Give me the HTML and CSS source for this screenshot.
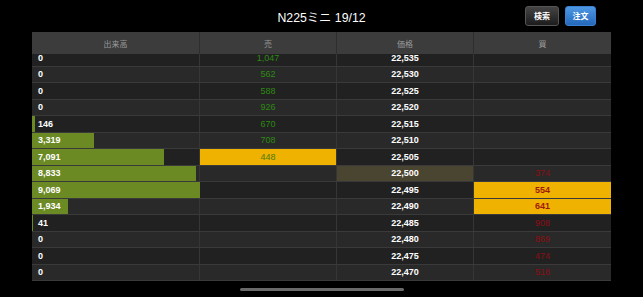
FILE: index.html
```html
<!DOCTYPE html>
<html lang="ja">
<head>
    <meta charset="UTF-8">
    <meta name="viewport" content="width=device-width, initial-scale=1.0">
    <title>N225ミニ 19/12</title>
    <link rel="stylesheet" href="styles.css">
</head>
<body>
    <div class="navbar">
        <div></div>
        <div class="title">N225ミニ 19/12</div>
        <div class="nav-buttons">
            <button class="btn btn-dark">検索</button>
            <button class="btn btn-blue">注文</button>
        </div>
    </div>

    <div class="board">
        <div class="board-head">
            <div>出来高</div>
            <div>売</div>
            <div>価格</div>
            <div>買</div>
        </div>
        <div class="board-body">
            <div class="rows">
                <div class="row"><div class="vol"><span>0</span></div><div class="sell">1,047</div><div class="price">22,535</div><div class="buy"></div></div>
                <div class="row"><div class="vol"><span>0</span></div><div class="sell">562</div><div class="price">22,530</div><div class="buy"></div></div>
                <div class="row"><div class="vol"><span>0</span></div><div class="sell">588</div><div class="price">22,525</div><div class="buy"></div></div>
                <div class="row"><div class="vol"><span>0</span></div><div class="sell">926</div><div class="price">22,520</div><div class="buy"></div></div>
                <div class="row"><div class="vol"><i class="bar" style="width: 3px"></i><span>146</span></div><div class="sell">670</div><div class="price">22,515</div><div class="buy"></div></div>
                <div class="row"><div class="vol"><i class="bar" style="width: 62px"></i><span>3,319</span></div><div class="sell">708</div><div class="price">22,510</div><div class="buy"></div></div>
                <div class="row"><div class="vol"><i class="bar" style="width: 132px"></i><span>7,091</span></div><div class="sell hot">448</div><div class="price">22,505</div><div class="buy"></div></div>
                <div class="row"><div class="vol"><i class="bar" style="width: 164px"></i><span>8,833</span></div><div class="sell"></div><div class="price current">22,500</div><div class="buy">374</div></div>
                <div class="row"><div class="vol"><i class="bar" style="width: 168px"></i><span>9,069</span></div><div class="sell"></div><div class="price">22,495</div><div class="buy hot">554</div></div>
                <div class="row"><div class="vol"><i class="bar" style="width: 36px"></i><span>1,934</span></div><div class="sell"></div><div class="price">22,490</div><div class="buy hot">641</div></div>
                <div class="row"><div class="vol"><i class="bar" style="width: 1px"></i><span>41</span></div><div class="sell"></div><div class="price">22,485</div><div class="buy">908</div></div>
                <div class="row"><div class="vol"><span>0</span></div><div class="sell"></div><div class="price">22,480</div><div class="buy">869</div></div>
                <div class="row"><div class="vol"><span>0</span></div><div class="sell"></div><div class="price">22,475</div><div class="buy">474</div></div>
                <div class="row"><div class="vol"><span>0</span></div><div class="sell"></div><div class="price">22,470</div><div class="buy">518</div></div>
            </div>
        </div>
    </div>

    <div class="home-bar"></div>
</body>
</html>
```

FILE: styles.css
```css
html, body {
    margin: 0;
    padding: 0;
    background: #000;
}
body {
    font-family: "Liberation Sans", "Noto Sans CJK JP", Arial, sans-serif;
    color: #fff;
    width: 643px;
    height: 297px;
    overflow: hidden;
}
.navbar {
    display: grid;
    grid-template-columns: 1fr auto 1fr;
    align-items: center;
    height: 32px;
}
.title {
    font-size: 12.3px;
    padding-top: 2px;
    margin-left: 0;
}
.nav-buttons {
    display: flex;
    justify-content: flex-end;
    gap: 6px;
    padding-right: 47px;
}
.btn {
    font-family: "Noto Sans CJK JP", sans-serif;
    font-size: 8px;
    font-weight: bold;
    color: #fff;
    height: 20px;
    padding: 0;
    border-radius: 3px;
    margin-top: -1px;
}
.btn-dark {
    width: 34px;
    background: linear-gradient(#444, #1c1c1c);
    border: 1px solid #555;
}
.btn-blue {
    width: 31px;
    background: linear-gradient(#4d98e4, #2468bc);
    border: 1px solid #3a7fd0;
}
.board {
    margin-left: 32px;
    width: 579px;
}
.board-head {
    display: grid;
    grid-template-columns: 168px 137px 137px 137px;
    height: 22px;
    background: #3c3c3c;
    font-family: "Noto Sans CJK JP", sans-serif;
    font-size: 8px;
    color: #9a9a9a;
}
.board-head div {
    display: flex;
    align-items: center;
    justify-content: center;
    border-right: 1px solid #2e2e2e;
}
.board-head div:last-child {
    border-right: none;
}
.board-body {
    height: 227px;
    overflow: hidden;
}
.rows {
    margin-top: -4px;
}
.row {
    display: grid;
    grid-template-columns: 168px 137px 137px 137px;
    height: 16.5px;
    box-sizing: border-box;
    border-bottom: 1px solid #3a3a3a;
    background: #212121;
    font-size: 9px;
    font-weight: bold;
}
.row:nth-child(even) {
    background: #292929;
}
.row > div {
    position: relative;
    display: flex;
    align-items: center;
    justify-content: center;
    border-right: 1px solid #363636;
}
.row > div:last-child {
    border-right: none;
}
.row .vol {
    justify-content: flex-start;
    padding-left: 6px;
}
.vol span {
    position: relative;
}
.bar {
    position: absolute;
    left: 0;
    top: 0;
    bottom: 0;
    background: #6b8a24;
}
.sell {
    color: #2d8a12;
    font-weight: normal;
}
.buy {
    color: #8c0d14;
    font-weight: normal;
}
.hot {
    background: #efb200;
}
.sell.hot {
    color: #4d7a10;
}
.buy.hot {
    color: #a01a0a;
    font-weight: bold;
}
.price.current {
    background: #4a4530;
}
.home-bar {
    width: 164px;
    height: 3px;
    border-radius: 2px;
    background: #6a6a6a;
    margin: 7px auto 0;
}
```
